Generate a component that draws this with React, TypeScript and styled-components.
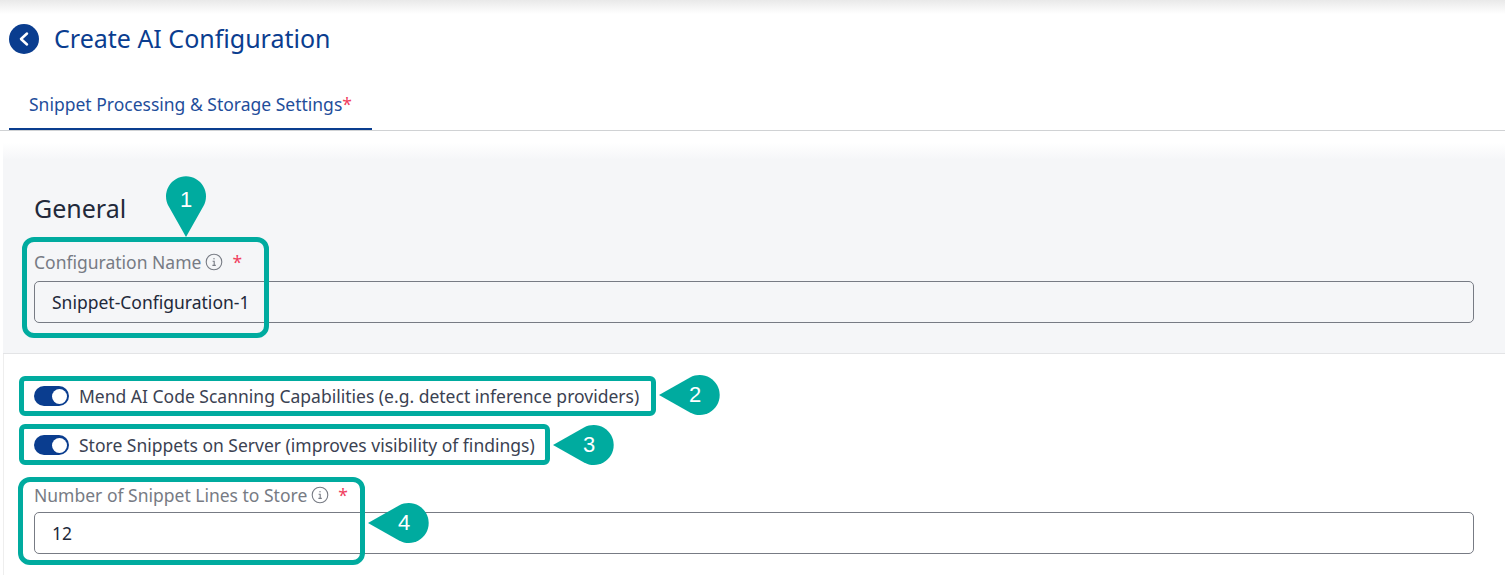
import React from 'react';
import styled, { createGlobalStyle } from 'styled-components';

const GlobalStyle = createGlobalStyle`
  html, body {
    margin: 0;
    padding: 0;
    background: #ffffff;
    font-family: 'Noto Sans', sans-serif;
  }
`;

const Page = styled.div`
  width: 1505px;
  height: 575px;
  overflow: hidden;
  position: relative;
  background: #ffffff;
`;

const TopShade = styled.div`
  height: 14px;
  background: linear-gradient(to bottom, #e9e9e9, #ffffff);
`;

const Header = styled.div`
  display: flex;
  align-items: center;
  gap: 15px;
  height: 30px;
  padding: 10px 0 0 9px;
`;

const BackButton = styled.div`
  width: 30px;
  height: 30px;
  border-radius: 50%;
  background: #0a3d8f;
  display: flex;
  align-items: center;
  justify-content: center;
`;

const Title = styled.h1`
  margin: -2px 0 0;
  font-size: 25px;
  font-weight: 400;
  line-height: 30px;
  color: #0a3d8f;
`;

const TabBar = styled.div`
  margin-top: 22px;
  padding-left: 9px;
  height: 55px;
  box-sizing: border-box;
  border-bottom: 1px solid #d0d2d4;
  display: flex;
  align-items: flex-end;
`;

const Tab = styled.div`
  width: 363px;
  height: 54px;
  box-sizing: border-box;
  padding: 16px 0 0 20px;
  border-bottom: 2px solid #0a3d8f;
  font-size: 17.5px;
  line-height: 24px;
  white-space: nowrap;
  color: #1f4e9b;
`;

const Star = styled.span`
  color: #f0405f;
`;

const ShadeGap = styled.div`
  height: 29px;
  margin-left: 3px;
  background: linear-gradient(to bottom, #ffffff 40%, #f5f6f8);
`;

const GeneralPanel = styled.section`
  margin-left: 3px;
  height: 194px;
  box-sizing: border-box;
  background: #f5f6f8;
  border-bottom: 1px solid #e3e4e6;
  padding: 31px 31px 0 31px;
`;

const Heading = styled.h2`
  margin: 0 0 25px;
  height: 34px;
  font-size: 25px;
  font-weight: 400;
  line-height: 34px;
  color: #22293a;
`;

const Field = styled.div<{ $top?: number }>`
  position: relative;
  margin-top: ${(p) => p.$top ?? 0}px;
`;

const Label = styled.div<{ $gap: number }>`
  display: flex;
  align-items: center;
  height: 24px;
  font-size: 17.5px;
  line-height: 24px;
  color: #777b84;
  margin-bottom: ${(p) => p.$gap}px;
`;

const InfoIcon = styled.svg`
  width: 18px;
  height: 18px;
  margin-left: 4px;
`;

const LabelStar = styled.span`
  color: #f0405f;
  margin-left: 9px;
`;

const Input = styled.div`
  height: 42px;
  box-sizing: border-box;
  border: 1px solid #777b84;
  border-radius: 5px;
  padding-left: 17px;
  display: flex;
  align-items: center;
  font-size: 17.5px;
  color: #22293a;
`;

const Body = styled.section`
  margin-left: 3px;
  height: 221px;
  box-sizing: border-box;
  padding: 26px 31px 0 30px;
  border-left: 1px solid #eeeeee;
`;

const ToggleRow = styled.div<{ $top?: number }>`
  position: relative;
  display: flex;
  align-items: center;
  gap: 10px;
  height: 32px;
  margin-top: ${(p) => p.$top ?? 0}px;
  font-size: 17.5px;
  color: #3b4252;
`;

const Toggle = styled.div`
  width: 35px;
  height: 20px;
  border-radius: 10px;
  background: #0a3d8f;
  position: relative;
  &::after {
    content: '';
    position: absolute;
    right: 2.5px;
    top: 2.5px;
    width: 15px;
    height: 15px;
    border-radius: 50%;
    background: #ffffff;
  }
`;

const Highlight = styled.div<{ $l: number; $t: number; $w: number; $h: number; $r: number }>`
  position: absolute;
  left: ${(p) => p.$l}px;
  top: ${(p) => p.$t}px;
  width: ${(p) => p.$w}px;
  height: ${(p) => p.$h}px;
  box-sizing: border-box;
  border: 5px solid #00ab9f;
  border-radius: ${(p) => p.$r}px;
  pointer-events: none;
`;

const PinWrap = styled.div<{ $l: number; $t: number; $w: number; $h: number }>`
  position: absolute;
  left: ${(p) => p.$l}px;
  top: ${(p) => p.$t}px;
  width: ${(p) => p.$w}px;
  height: ${(p) => p.$h}px;
`;

const PinShape = styled.svg`
  position: absolute;
  inset: 0;
  width: 100%;
  height: 100%;
`;

const PinNumber = styled.span<{ $vertical?: boolean }>`
  position: absolute;
  ${(p) =>
    p.$vertical
      ? 'left: 0; right: 0; top: 0; height: 48px;'
      : 'right: 5px; top: 0; width: 40px; height: 100%;'}
  display: flex;
  align-items: center;
  justify-content: center;
  font-family: 'Liberation Sans', Arial, sans-serif;
  font-size: 22px;
  color: #ffffff;
`;

const Info = () => (
  <InfoIcon viewBox="0 0 18 18" fill="none" stroke="#777b84">
    <circle cx="9" cy="9" r="7.8" strokeWidth="1.1" />
    <path d="M7.6 8.2H9.2V12.4M7.4 12.4H10.8" strokeWidth="1.1" />
    <circle cx="9" cy="5.7" r="0.7" fill="#777b84" stroke="none" />
  </InfoIcon>
);

const DownPin = ({ n, l, t }: { n: string; l: number; t: number }) => (
  <PinWrap $l={l} $t={t} $w={40} $h={62}>
    <PinShape viewBox="0 0 40 62">
      <path d="M20 61 L2.5 30 A20 20 0 1 1 37.5 30 Z" fill="#00ab9f" />
    </PinShape>
    <PinNumber $vertical>{n}</PinNumber>
  </PinWrap>
);

const LeftPin = ({ n, l, t }: { n: string; l: number; t: number }) => (
  <PinWrap $l={l} $t={t} $w={62} $h={40}>
    <PinShape viewBox="0 0 62 40">
      <path d="M1 20 L32 2.5 A20 20 0 1 1 32 37.5 Z" fill="#00ab9f" />
    </PinShape>
    <PinNumber>{n}</PinNumber>
  </PinWrap>
);

const App: React.FC = () => {
  return (
    <Page>
      <GlobalStyle />
      <TopShade />
      <Header>
        <BackButton>
          <svg width="14" height="16" viewBox="0 0 14 16" fill="none">
            <path d="M10 2.5L4 8L10 13.5" stroke="#ffffff" strokeWidth="2.5" strokeLinecap="round" strokeLinejoin="round" />
          </svg>
        </BackButton>
        <Title>Create AI Configuration</Title>
      </Header>
      <TabBar>
        <Tab>
          Snippet Processing &amp; Storage Settings<Star>*</Star>
        </Tab>
      </TabBar>
      <ShadeGap />
      <GeneralPanel>
        <Heading>General</Heading>
        <Field>
          <Label $gap={7}>
            Configuration Name
            <Info />
            <LabelStar>*</LabelStar>
          </Label>
          <Input>Snippet-Configuration-1</Input>
          <Highlight $l={-12} $t={-13} $w={247} $h={101} $r={12} />
          <DownPin n="1" l={132} t={-74} />
        </Field>
      </GeneralPanel>
      <Body>
        <ToggleRow>
          <Toggle />
          Mend AI Code Scanning Capabilities (e.g. detect inference providers)
          <Highlight $l={-15} $t={-4} $w={637} $h={40} $r={6} />
          <LeftPin n="2" l={624} t={-5} />
        </ToggleRow>
        <ToggleRow $top={17}>
          <Toggle />
          Store Snippets on Server (improves visibility of findings)
          <Highlight $l={-15} $t={-5} $w={531} $h={41} $r={6} />
          <LeftPin n="3" l={518} t={-4} />
        </ToggleRow>
        <Field $top={22}>
          <Label $gap={5}>
            Number of Snippet Lines to Store
            <Info />
            <LabelStar>*</LabelStar>
          </Label>
          <Input>12</Input>
          <Highlight $l={-16} $t={-6} $w={347} $h={88} $r={12} />
          <LeftPin n="4" l={333} t={20} />
        </Field>
      </Body>
    </Page>
  );
};

export default App;
